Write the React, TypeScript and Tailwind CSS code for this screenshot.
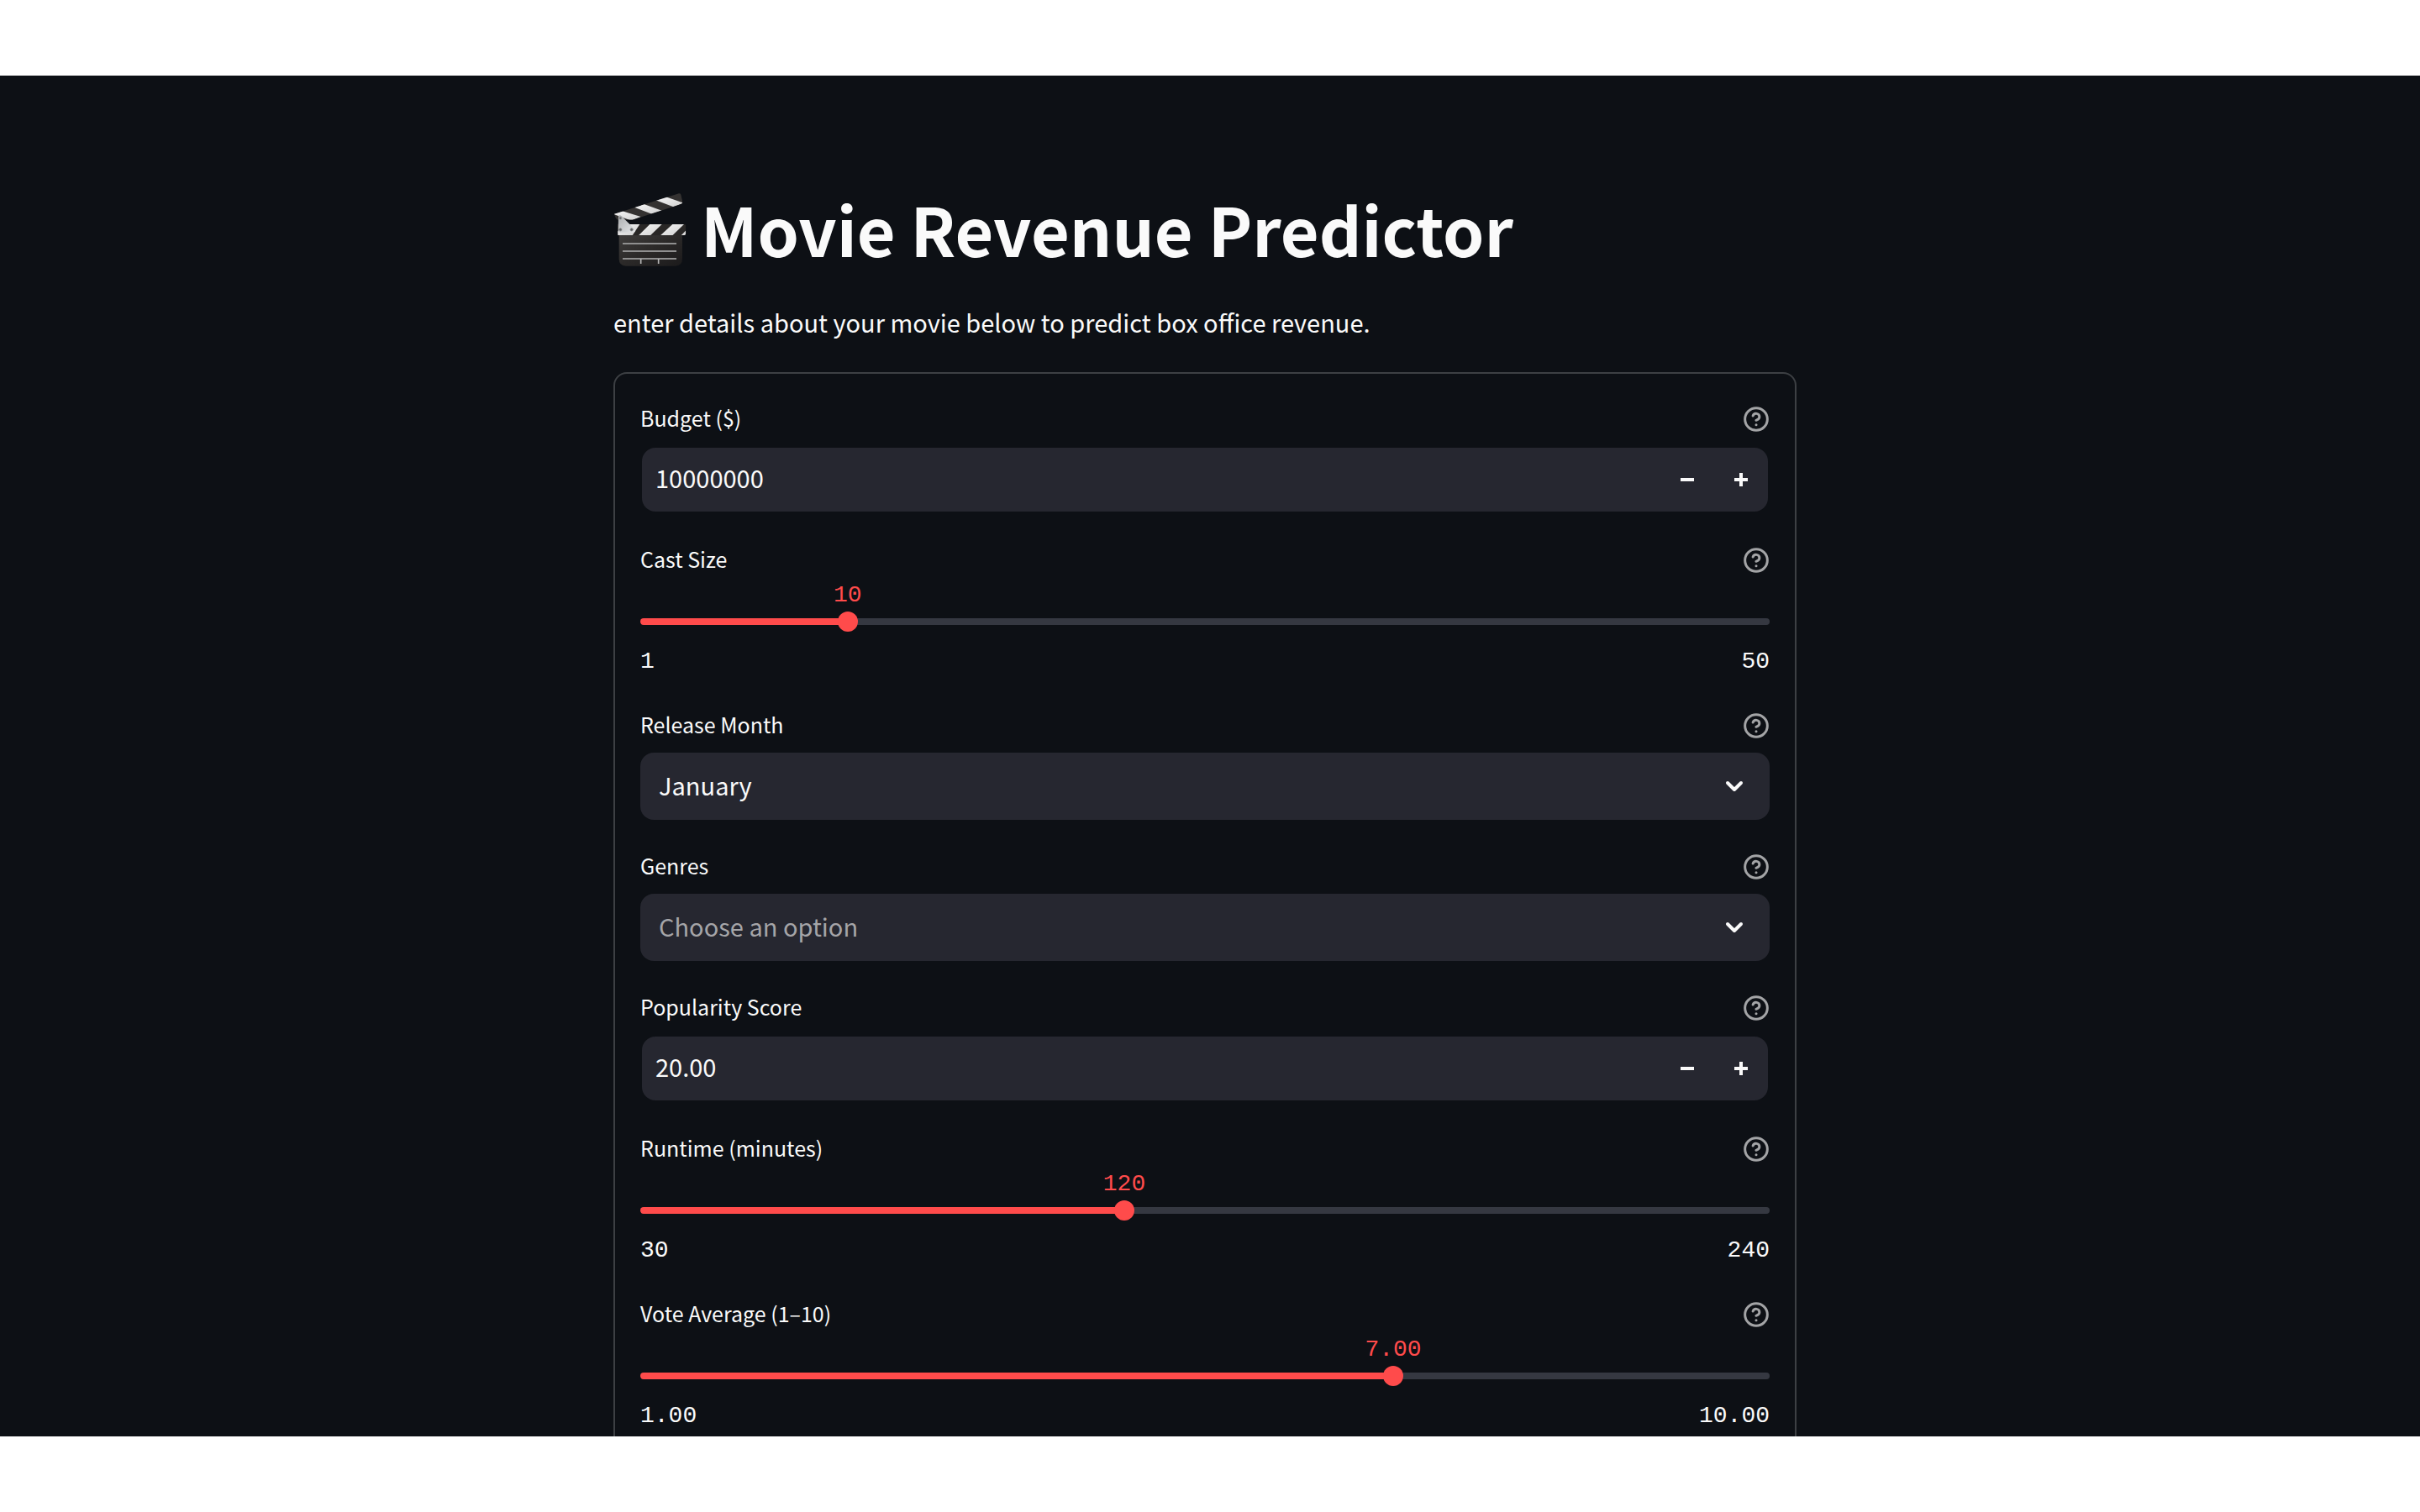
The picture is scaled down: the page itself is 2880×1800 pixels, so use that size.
import { useState } from "react"
import type { ReactNode } from "react"

const HelpIcon = () => (
    <svg viewBox="0 0 24 24" className="size-8" fill="none" stroke="currentColor" strokeWidth="2.25" strokeLinecap="round" strokeLinejoin="round">
        <circle cx="12" cy="12" r="10" />
        <path d="M9.09 9a3 3 0 0 1 5.83 1c0 2-3 3-3 3" />
        <path d="M12 17h.01" />
    </svg>
)

const Chevron = () => (
    <svg viewBox="0 0 32 32" className="size-8 pointer-events-none" fill="none" stroke="currentColor" strokeWidth="4" strokeLinecap="round" strokeLinejoin="round">
        <path d="M8 12l8 8 8-8" />
    </svg>
)

const Clapper = () => (
    <svg viewBox="30 27 264 288" className="h-24 w-[88px] shrink-0" aria-hidden="true">
        <defs>
            <linearGradient id="slate" x1="0" y1="0" x2="1" y2="1">
                <stop offset="0" stopColor="#403e3d" />
                <stop offset="0.5" stopColor="#2b2928" />
                <stop offset="1" stopColor="#1b1a1b" />
            </linearGradient>
            <linearGradient id="hinge" x1="0" y1="0" x2="1" y2="1">
                <stop offset="0" stopColor="#a9abad" />
                <stop offset="1" stopColor="#e6e8ea" />
            </linearGradient>
            <linearGradient id="stripe" x1="0" y1="0" x2="1" y2="1">
                <stop offset="0" stopColor="#f6f6f6" />
                <stop offset="1" stopColor="#cfcfcf" />
            </linearGradient>
            <clipPath id="topArm">
                <path d="M33 119L264 46q5-1 7 4l6 26q0 6-5 8L98 140H44q-8-8-11-21z" />
            </clipPath>
            <clipPath id="lowArm">
                <path d="M44 156H283q6 0 6 6v25q0 9-9 9H46z" />
            </clipPath>
        </defs>
        <path d="M50 190H276V280q0 25-25 25H75q-25 0-25-25z" fill="url(#slate)" />
        <g clipPath="url(#topArm)">
            <path d="M30 40h260v110H30z" fill="#343231" />
            <path d="M28 119L62 109L128 129L94 143z" fill="url(#stripe)" />
            <path d="M104 95L139 84L203 107L167 119z" fill="url(#stripe)" />
            <path d="M181 70L217 58L280 80L244 94z" fill="url(#stripe)" />
        </g>
        <g clipPath="url(#lowArm)">
            <path d="M40 150h255v50H40z" fill="#292726" />
            <path d="M80 156H124L98 196H42V184z" fill="url(#stripe)" />
            <path d="M160 156H203L162 196H120z" fill="url(#stripe)" />
            <path d="M241 156H282L241 196H198z" fill="url(#stripe)" />
            <path d="M289 178v18H272z" fill="#dcdcdc" />
        </g>
        <path d="M48 126q5-5 11 1L107 175q4 9-6 10H53q-6 0-6-6z" fill="url(#hinge)" />
        <g fill="#5f6163" stroke="#8d8f91" strokeWidth="2">
            <circle cx="55" cy="134" r="4" />
            <circle cx="55" cy="175" r="5" />
            <circle cx="95" cy="175" r="5" />
        </g>
        <path d="M63 225H255M63 252H255M63 279H255" stroke="#8f8f8f" strokeWidth="6" />
        <path d="M128 279v18M191 279v18" stroke="#b5b5b5" strokeWidth="5" />
    </svg>
)

const Field = ({ id, label, children }: { id: string; label: string; children: ReactNode }) => (
    <div>
        <div className="flex h-12 items-start justify-between">
            <label htmlFor={id} className="text-[25px] leading-[44px]">{label}</label>
            <button type="button" aria-label={`Help for ${label}`} className="self-center text-[#a3a4a6]">
                <HelpIcon />
            </button>
        </div>
        {children}
    </div>
)

const NumberField = ({ id, label, start, step, digits }: { id: string; label: string; start: number; step: number; digits: number }) => {
    const [value, setValue] = useState(start.toFixed(digits))
    const change = (by: number) => setValue((Number(value) + by).toFixed(digits))

    return (
        <Field id={id} label={label}>
            <div className="mx-[2px] mt-[10px] mb-[2px] flex h-[76px] overflow-hidden rounded-2xl bg-[#262730]">
                <input
                    id={id}
                    type="text"
                    inputMode="decimal"
                    value={value}
                    onChange={(e) => setValue(e.target.value)}
                    className="min-w-0 flex-1 bg-transparent px-4 pb-1 text-[29px] outline-none"
                />
                <button type="button" aria-label="Decrease" onClick={() => change(-step)} className="flex w-16 items-center justify-center">
                    <svg viewBox="0 0 16 16" className="size-4" fill="currentColor"><path d="M0 6h16v4H0z" /></svg>
                </button>
                <button type="button" aria-label="Increase" onClick={() => change(step)} className="flex w-16 items-center justify-center">
                    <svg viewBox="0 0 16 16" className="size-4" fill="currentColor"><path d="M6 0h4v6h6v4h-6v6H6v-6H0V6h6z" /></svg>
                </button>
            </div>
        </Field>
    )
}

const SelectField = ({ id, label, options, placeholder }: { id: string; label: string; options: string[]; placeholder?: string }) => {
    const [value, setValue] = useState(placeholder ? "" : options[0])

    return (
        <Field id={id} label={label}>
            <div className="mt-2 grid items-center">
                <select
                    id={id}
                    value={value}
                    onChange={(e) => setValue(e.target.value)}
                    className={`col-start-1 row-start-1 h-20 w-full appearance-none rounded-2xl bg-[#262730] px-[22px] pb-[3px] text-[29px] outline-none ${value ? "text-[#fafafa]" : "text-[#a5a5a8]"}`}
                >
                    {placeholder && <option value="">{placeholder}</option>}
                    {options.map((o) => <option key={o}>{o}</option>)}
                </select>
                <div className="pointer-events-none col-start-1 row-start-1 mr-[26px] justify-self-end">
                    <Chevron />
                </div>
            </div>
        </Field>
    )
}

const SliderField = ({ id, label, min, max, start, step, digits }: { id: string; label: string; min: number; max: number; start: number; step: number; digits: number }) => {
    const [value, setValue] = useState(start)
    const percent = ((value - min) / (max - min)) * 100

    return (
        <Field id={id} label={label}>
            <div className="flex h-[117px] flex-col font-['Liberation_Mono',monospace] text-[28px] leading-9">
                <output htmlFor={id} className="w-max -translate-x-1/2 text-[#ff4b4b]" style={{ marginLeft: `${percent}%` }}>
                    {value.toFixed(digits)}
                </output>
                <div className="mt-px grid h-6 items-center">
                    <div
                        className="col-start-1 row-start-1 h-2 rounded-full"
                        style={{ background: `linear-gradient(to right, #ff4b4b ${percent}%, #353841 ${percent}%)` }}
                    />
                    {/* wider than the track by one thumb, so the thumb centre can reach both ends */}
                    <input
                        id={id}
                        type="range"
                        min={min}
                        max={max}
                        step={step}
                        value={value}
                        onChange={(e) => setValue(Number(e.target.value))}
                        className="col-start-1 row-start-1 -mx-3 h-6 w-[calc(100%+24px)] appearance-none bg-transparent [&::-webkit-slider-thumb]:size-6 [&::-webkit-slider-thumb]:appearance-none [&::-webkit-slider-thumb]:rounded-full [&::-webkit-slider-thumb]:bg-[#ff4b4b]"
                    />
                </div>
                <div className="mt-[18px] flex justify-between">
                    <span>{min.toFixed(digits)}</span>
                    <span>{max.toFixed(digits)}</span>
                </div>
            </div>
        </Field>
    )
}

const months = ["January", "February", "March", "April", "May", "June", "July", "August", "September", "October", "November", "December"]
const genres = ["Action", "Adventure", "Animation", "Comedy", "Crime", "Drama", "Family", "Fantasy", "Horror", "Romance", "Thriller"]

const App = () => {
    return (
        <div className="h-screen bg-white py-[90px]">
            <div className="h-full overflow-hidden bg-[#0d1015] pr-3 font-['Noto_Sans_CJK_SC',sans-serif] text-[#fafafa]">
                <main className="mx-auto w-full max-w-[1408px] pt-[134px]">
                    <h1 className="flex items-center gap-4 text-[79px] leading-24 font-bold">
                        <Clapper />
                        Movie Revenue Predictor
                    </h1>
                    <p className="mt-[39px] text-[29px] leading-12">enter details about your movie below to predict box office revenue.</p>

                    <form className="mt-9 flex flex-col gap-8 rounded-2xl border-2 border-[#3d4044] p-[30px]">
                        <NumberField id="budget" label="Budget ($)" start={10000000} step={1000000} digits={0} />
                        <SliderField id="cast" label="Cast Size" min={1} max={50} start={10} step={1} digits={0} />
                        <SelectField id="month" label="Release Month" options={months} />
                        <SelectField id="genres" label="Genres" options={genres} placeholder="Choose an option" />
                        <NumberField id="popularity" label="Popularity Score" start={20} step={1} digits={2} />
                        <SliderField id="runtime" label="Runtime (minutes)" min={30} max={240} start={120} step={1} digits={0} />
                        <SliderField id="vote" label="Vote Average (1–10)" min={1} max={10} start={7} step={0.1} digits={2} />
                    </form>
                </main>
            </div>
        </div>
    )
}

export default App
